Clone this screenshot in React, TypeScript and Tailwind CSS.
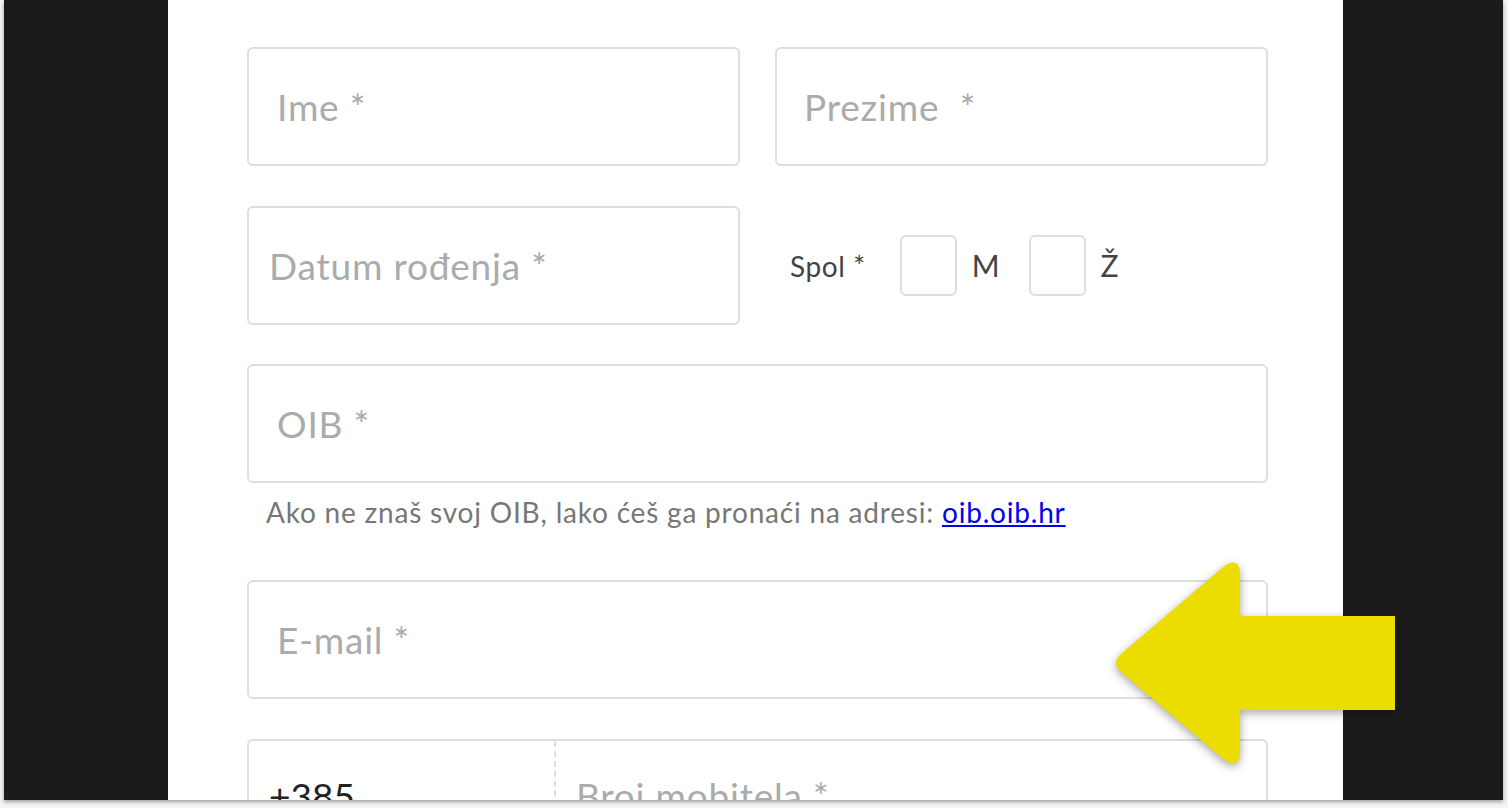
import React from "react";

const font = { fontFamily: "Lato, 'Open Sans', sans-serif" };

function Field({ label, className = "" }: { label: string; className?: string }) {
  return (
    <div
      className={`h-[119px] rounded-[6px] border-2 border-[#dedede] bg-white flex items-center ${className}`}
    >
      <span className="text-[37px] tracking-[0.8px] text-[#ababab] leading-none">{label}</span>
    </div>
  );
}

function Arrow() {
  return (
    <svg
      className="absolute left-0 top-0 pointer-events-none"
      width="1508"
      height="808"
      viewBox="0 0 1508 808"
      style={{ filter: "drop-shadow(0 3px 5px rgba(0,0,0,0.35))" }}
    >
      <path
        d="M1240 616 H1395 V710 H1240 V750 Q1240 772 1222 758 L1121 672 Q1111 663 1121 654 L1222 568 Q1240 554 1240 576 Z"
        fill="#ecdd00"
      />
    </svg>
  );
}

export default function App() {
  return (
    <div className="relative w-[1508px] h-[808px] bg-[#f4f4f4] overflow-hidden" style={font}>
      <div className="ml-[4px] w-[1499px] h-[800px] bg-[#1b1b1b] shadow-[0_2px_4px_rgba(0,0,0,0.35)] overflow-hidden">
        <div className="ml-[164px] w-[1175px] h-full bg-white pl-[79px] pt-[47px]">
          <div className="w-[1021px] flex flex-col">
            <div className="flex gap-[35px]">
              <Field label="Ime *" className="w-[493px] pl-[28px]" />
              <Field label="Prezime  *" className="w-[493px] pl-[27px] whitespace-pre" />
            </div>

            <div className="flex items-center mt-[40px]">
              <Field label="Datum rođenja *" className="w-[493px] pl-[20px]" />
              <span className="ml-[50px] text-[28px] tracking-[0.6px] text-[#444]">Spol *</span>
              <div className="ml-[34px] w-[57px] h-[61px] rounded-[6px] border-2 border-[#dedede]" />
              <span className="ml-[15px] text-[30px] text-[#444]">M</span>
              <div className="ml-[29px] w-[57px] h-[61px] rounded-[6px] border-2 border-[#dedede]" />
              <span className="ml-[15px] text-[30px] text-[#444]">Ž</span>
            </div>

            <Field label="OIB *" className="mt-[39px] w-full pl-[28px]" />
            <p className="mt-[12px] pl-[19px] text-[28px] tracking-[0.8px] text-[#777] leading-[34px]">
              Ako ne znaš svoj OIB, lako ćeš ga pronaći na adresi:{" "}
              <a href="#" className="text-[#0000ee] underline">
                oib.oib.hr
              </a>
            </p>

            <Field label="E-mail *" className="mt-[51px] w-full pl-[28px]" />

            <div className="mt-[40px] h-[119px] w-full rounded-[6px] border-2 border-[#dedede] flex">
              <div className="w-[307px] border-r-2 border-dashed border-[#dedede] pl-[20px] pt-[27px]">
                <span className="text-[37px] text-[#222]">+385</span>
              </div>
              <div className="pl-[20px] pt-[27px]">
                <span className="text-[37px] tracking-[0.8px] text-[#ababab]">Broj mobitela *</span>
              </div>
            </div>
          </div>
        </div>
      </div>
      <Arrow />
    </div>
  );
}
